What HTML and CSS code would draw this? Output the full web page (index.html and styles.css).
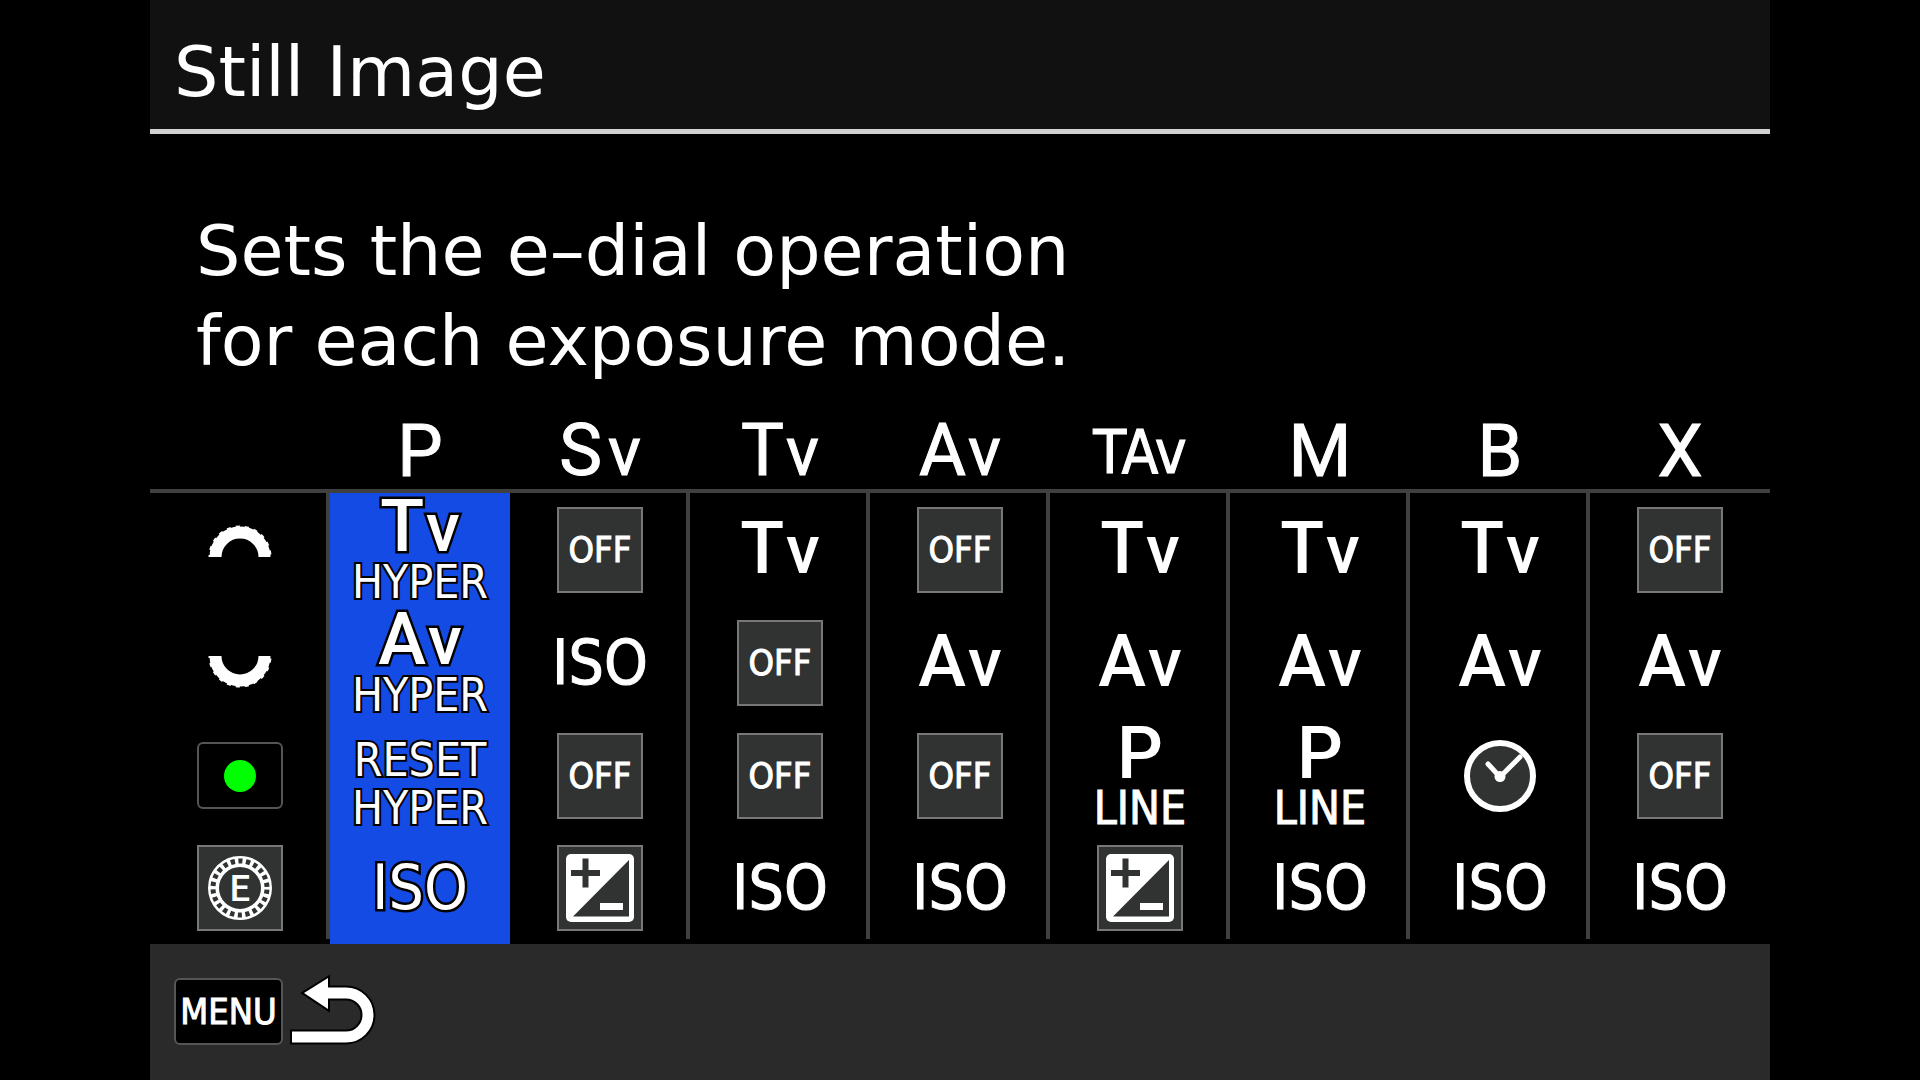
FILE: index.html
```
<!DOCTYPE html>
<html lang="en">
  <head>
    <meta charset="utf-8">
    <title>Still Image</title>
    <link rel="stylesheet" href="styles.css">
  </head>
  <body>
    <!-- shared icons -->
    <svg class="defs" aria-hidden="true">
      <symbol id="dial" viewBox="0 0 64 32">
        <path d="M7.500 32a24.500 24.500 0 0 1 49 0" fill="none" stroke="#fff" stroke-width="12"/>
        <path d="M2.500 32a29.500 29.500 0 0 1 59 0" fill="none" stroke="#fff" stroke-width="4" stroke-dasharray="4 4.820" stroke-dashoffset="2"/>
      </symbol>
      <symbol id="exposure" viewBox="0 0 86 86">
        <rect x="9" y="9" width="68" height="68" rx="5" fill="#fff"/>
        <path d="M16 71.500L72 15v56.500zM14 25h11.500V13.500h6V25H43v6H31.500v11.500h-6V31H14z" fill="#303332"/>
        <path d="M43 58h23v7H43z" fill="#fff"/>
      </symbol>
    </svg>

    <div class="screen">
      <header class="header">
        <h1>Still Image</h1>
      </header>

      <p class="description">Sets the e–dial operation<br>for each exposure mode.</p>

      <table class="modes">
        <thead>
          <tr>
            <td></td>
            <th scope="col">P</th>
            <th scope="col">S<span class="sub wide">v</span></th>
            <th scope="col">T<span class="sub">v</span></th>
            <th scope="col">A<span class="sub">v</span></th>
            <th scope="col" class="narrow">TAv</th>
            <th scope="col">M</th>
            <th scope="col">B</th>
            <th scope="col">X</th>
          </tr>
        </thead>
        <tbody>
          <tr>
            <th scope="row" aria-label="Front e-dial">
              <svg class="dial" viewBox="0 0 64 50"><use href="#dial" width="64" height="32"/></svg>
            </th>
            <td class="selected"><div class="stack"><span class="big">T<span class="sub">v</span></span><span class="small">HYPER</span></div></td>
            <td><span class="tile">OFF</span></td>
            <td>T<span class="sub">v</span></td>
            <td><span class="tile">OFF</span></td>
            <td>T<span class="sub">v</span></td>
            <td>T<span class="sub">v</span></td>
            <td>T<span class="sub">v</span></td>
            <td><span class="tile">OFF</span></td>
          </tr>
          <tr>
            <th scope="row" aria-label="Rear e-dial">
              <svg class="dial" viewBox="0 0 64 50"><use href="#dial" width="64" height="32" transform="matrix(1 0 0 -1 0 50)"/></svg>
            </th>
            <td class="selected"><div class="stack"><span class="big">A<span class="sub">v</span></span><span class="small">HYPER</span></div></td>
            <td class="iso">ISO</td>
            <td><span class="tile">OFF</span></td>
            <td>A<span class="sub">v</span></td>
            <td>A<span class="sub">v</span></td>
            <td>A<span class="sub">v</span></td>
            <td>A<span class="sub">v</span></td>
            <td>A<span class="sub">v</span></td>
          </tr>
          <tr>
            <th scope="row" aria-label="Green button"><span class="key green"><i class="dot"></i></span></th>
            <td class="selected"><div class="stack"><span class="small">RESET</span><span class="small">HYPER</span></div></td>
            <td><span class="tile">OFF</span></td>
            <td><span class="tile">OFF</span></td>
            <td><span class="tile">OFF</span></td>
            <td><div class="stack"><span class="big">P</span><span class="small">LINE</span></div></td>
            <td><div class="stack"><span class="big">P</span><span class="small">LINE</span></div></td>
            <td>
              <svg class="clock" viewBox="0 0 72 72" role="img" aria-label="Timer">
                <circle cx="36" cy="36" r="33" fill="#303332" stroke="#fff" stroke-width="6"/>
                <path d="M24 24l12 13 20-20" fill="none" stroke="#fff" stroke-width="5" stroke-linecap="round"/>
                <circle cx="36" cy="36.500" r="5.500" fill="#fff"/>
              </svg>
            </td>
            <td><span class="tile">OFF</span></td>
          </tr>
          <tr>
            <th scope="row" aria-label="Setting dial">
              <span class="tile">
                <svg class="icon" viewBox="0 0 86 86">
                  <circle cx="43" cy="43" r="26.500" fill="none" stroke="#fff" stroke-width="11"/>
                  <circle cx="43" cy="43" r="27" fill="none" stroke="#303332" stroke-width="5" stroke-dasharray="4.200 3.510" stroke-dashoffset="-1.750"/>
                  <text x="43" y="56" class="dial-letter">E</text>
                </svg>
              </span>
            </th>
            <td class="selected iso">ISO</td>
            <td><span class="tile"><svg class="icon" role="img" aria-label="Exposure compensation"><use href="#exposure"/></svg></span></td>
            <td class="iso">ISO</td>
            <td class="iso">ISO</td>
            <td><span class="tile"><svg class="icon" role="img" aria-label="Exposure compensation"><use href="#exposure"/></svg></span></td>
            <td class="iso">ISO</td>
            <td class="iso">ISO</td>
            <td class="iso">ISO</td>
          </tr>
        </tbody>
      </table>

      <footer class="footer">
        <button type="button" class="back">
          <span class="key menu">MENU</span>
          <svg class="arrow" viewBox="0 0 86 68" aria-hidden="true">
            <path d="M35 15h20a22 22 0 0 1 0 44H-1" fill="none" stroke="#000" stroke-width="15"/>
            <path d="M13 15L37 0v31z" fill="#fff" stroke="#000" stroke-width="4" paint-order="stroke"/>
            <path d="M35 15h20a22 22 0 0 1 0 44H1" fill="none" stroke="#fff" stroke-width="11"/>
          </svg>
        </button>
      </footer>
    </div>
  </body>
</html>
```
FILE: styles.css
```
* {
  box-sizing: border-box;
}
body {
  margin: 0;
  background: #000;
  color: #fff;
  font-family: Roboto, "Liberation Sans", sans-serif;
}
.defs {
  display: none;
}
.screen {
  display: flex;
  flex-direction: column;
  width: 84.375%;
  min-height: 100vh;
  margin: 0 auto;
}

.header {
  padding: 27px 24px 12px;
  background: #111;
  border-bottom: 5px solid #d2d2d2;
}
.header h1,
.description {
  margin: 0;
  font-family: "DejaVu Sans", sans-serif;
  font-size: 70px;
  font-weight: normal;
  line-height: 90px;
}
.description {
  padding: 72px 46px 24px;
}

.modes {
  width: 100%;
  table-layout: fixed;
  border-spacing: 0;
  font-size: 72px;
  line-height: 72px;
  text-align: center;
}
.modes th,
.modes td {
  padding: 0;
}
.modes thead th,
.modes thead td {
  height: 83px;
  padding-top: 4px;
  border-bottom: 4px solid #404040;
  font-weight: normal;
  -webkit-text-stroke: 1px #fff;
}
.modes tbody th,
.modes tbody td {
  height: 113px;
  font-weight: 500;
  background: linear-gradient(#404040, #404040) right top / 4px 100% no-repeat;
}
.modes tbody tr:last-child > * {
  height: 112px;
  background-size: 4px calc(100% - 5px);
}
.modes tbody tr > :last-child {
  background: none;
}
.modes tbody .selected {
  background: #144be4;
  -webkit-text-stroke: 5px #000;
  paint-order: stroke fill;
}
.modes svg {
  display: block;
  margin: 0 auto;
}
.modes .narrow,
.iso,
.small,
.tile,
.menu {
  font-family: "DejaVu Sans Condensed", sans-serif;
  -webkit-text-stroke: 1px #fff;
}
.selected .small {
  -webkit-text-stroke: 4px #000;
}
.sub {
  margin-left: 2px;
  font-size: 68px;
}
.wide {
  margin-left: 6px;
}
.modes .narrow {
  font-size: 60px;
}
.iso {
  font-size: 62px;
}

/* two-line values sit on the bottom of the row */
.stack {
  display: flex;
  flex-direction: column;
  justify-content: flex-end;
  height: 113px;
}
.big {
  line-height: 60px;
}
.small {
  font-size: 46px;
  line-height: 48px;
}

.tile {
  display: flex;
  align-items: center;
  justify-content: center;
  width: 86px;
  height: 86px;
  margin: 0 auto;
  border: 2px solid #777;
  background: #303332;
  font-size: 36px;
}
.icon {
  flex: none;
  width: 86px;
  height: 86px;
}
.dial {
  width: 64px;
  height: 50px;
}
.dial-letter {
  font-family: Roboto, sans-serif;
  font-size: 36px;
  fill: #fff;
  text-anchor: middle;
  -webkit-text-stroke: 0;
}
.clock {
  width: 72px;
  height: 72px;
}
.key {
  display: flex;
  align-items: center;
  justify-content: center;
  height: 67px;
  border: 2px solid #555;
  border-radius: 6px;
  background: #000;
}
.green {
  width: 86px;
  margin: 0 auto;
}
.dot {
  width: 32px;
  height: 32px;
  border-radius: 50%;
  background: #0f0;
}

.footer {
  flex: 1;
  padding: 34px 24px;
  background: #2a2a2a;
}
.back {
  display: flex;
  gap: 8px;
  padding: 0;
  border: 0;
  background: none;
  color: #fff;
}
.menu {
  width: 109px;
  font-size: 36px;
}
.arrow {
  width: 86px;
  height: 68px;
  overflow: visible;
}
```
